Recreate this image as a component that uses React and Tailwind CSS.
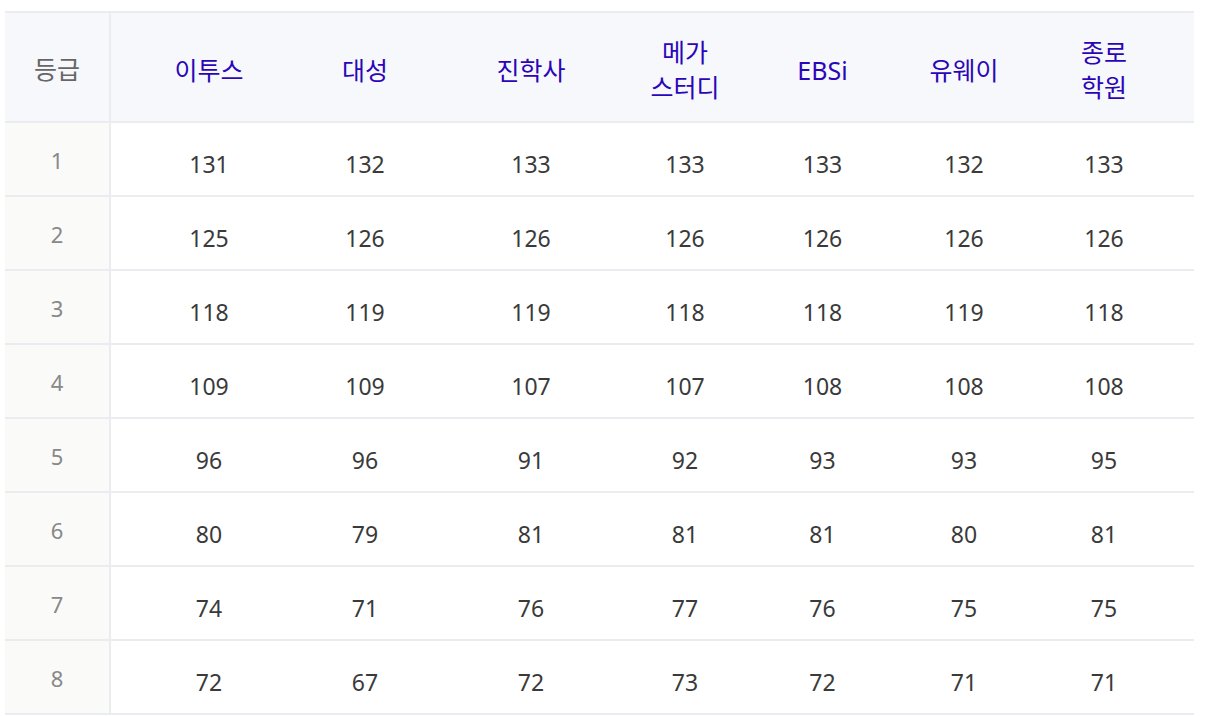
import React from 'react';

// 대학별 배치표 등급 컷 비교 표
const SCHOOLS = [
  ['이투스'],
  ['대성'],
  ['진학사'],
  ['메가', '스터디'],
  ['EBSi'],
  ['유웨이'],
  ['종로', '학원'],
];

const ROWS = [
  [131, 132, 133, 133, 133, 132, 133],
  [125, 126, 126, 126, 126, 126, 126],
  [118, 119, 119, 118, 118, 119, 118],
  [109, 109, 107, 107, 108, 108, 108],
  [96, 96, 91, 92, 93, 93, 95],
  [80, 79, 81, 81, 81, 80, 81],
  [74, 71, 76, 77, 76, 75, 75],
  [72, 67, 72, 73, 72, 71, 71],
];

const font = { fontFamily: '"Noto Sans", "Noto Sans CJK KR", sans-serif' };

export default function App() {
  return (
    <div className="min-h-screen bg-white pt-[11px] pl-[5px]" style={font}>
      <div className="w-[1189px] border-t-2 border-[#ebecf0] grid grid-cols-[106px_196px_116px_216px_92px_183px_100px_180px]">
        {/* Header */}
        <div className="h-[110px] pt-[6px] bg-[#f7f8fb] border-b-2 border-r-2 border-[#ebecf0] flex items-center justify-center text-[25px] text-[#666]">
          등급
        </div>
        {SCHOOLS.map((lines, i) => (
          <div
            key={i}
            className="h-[110px] pt-[6px] bg-[#f7f8fb] border-b-2 border-[#ebecf0] flex flex-col items-center justify-center text-[25px] leading-[35px] text-[#2a06b8]"
          >
            {lines.map((l) => (
              <span key={l}>{l}</span>
            ))}
          </div>
        ))}

        {/* Body */}
        {ROWS.map((row, r) => (
          <React.Fragment key={r}>
            <div className="h-[74px] bg-[#fafaf8] border-b-2 border-r-2 border-[#ebecf0] flex items-start justify-center pt-[22px] text-[22px] leading-[30px] text-[#888]">
              {r + 1}
            </div>
            {row.map((v, c) => (
              <div
                key={c}
                className="h-[74px] border-b-2 border-[#ebecf0] flex items-start justify-center pt-[26px] text-[23px] leading-[30px] text-[#3a3a3a]"
              >
                {v}
              </div>
            ))}
          </React.Fragment>
        ))}
      </div>
    </div>
  );
}
